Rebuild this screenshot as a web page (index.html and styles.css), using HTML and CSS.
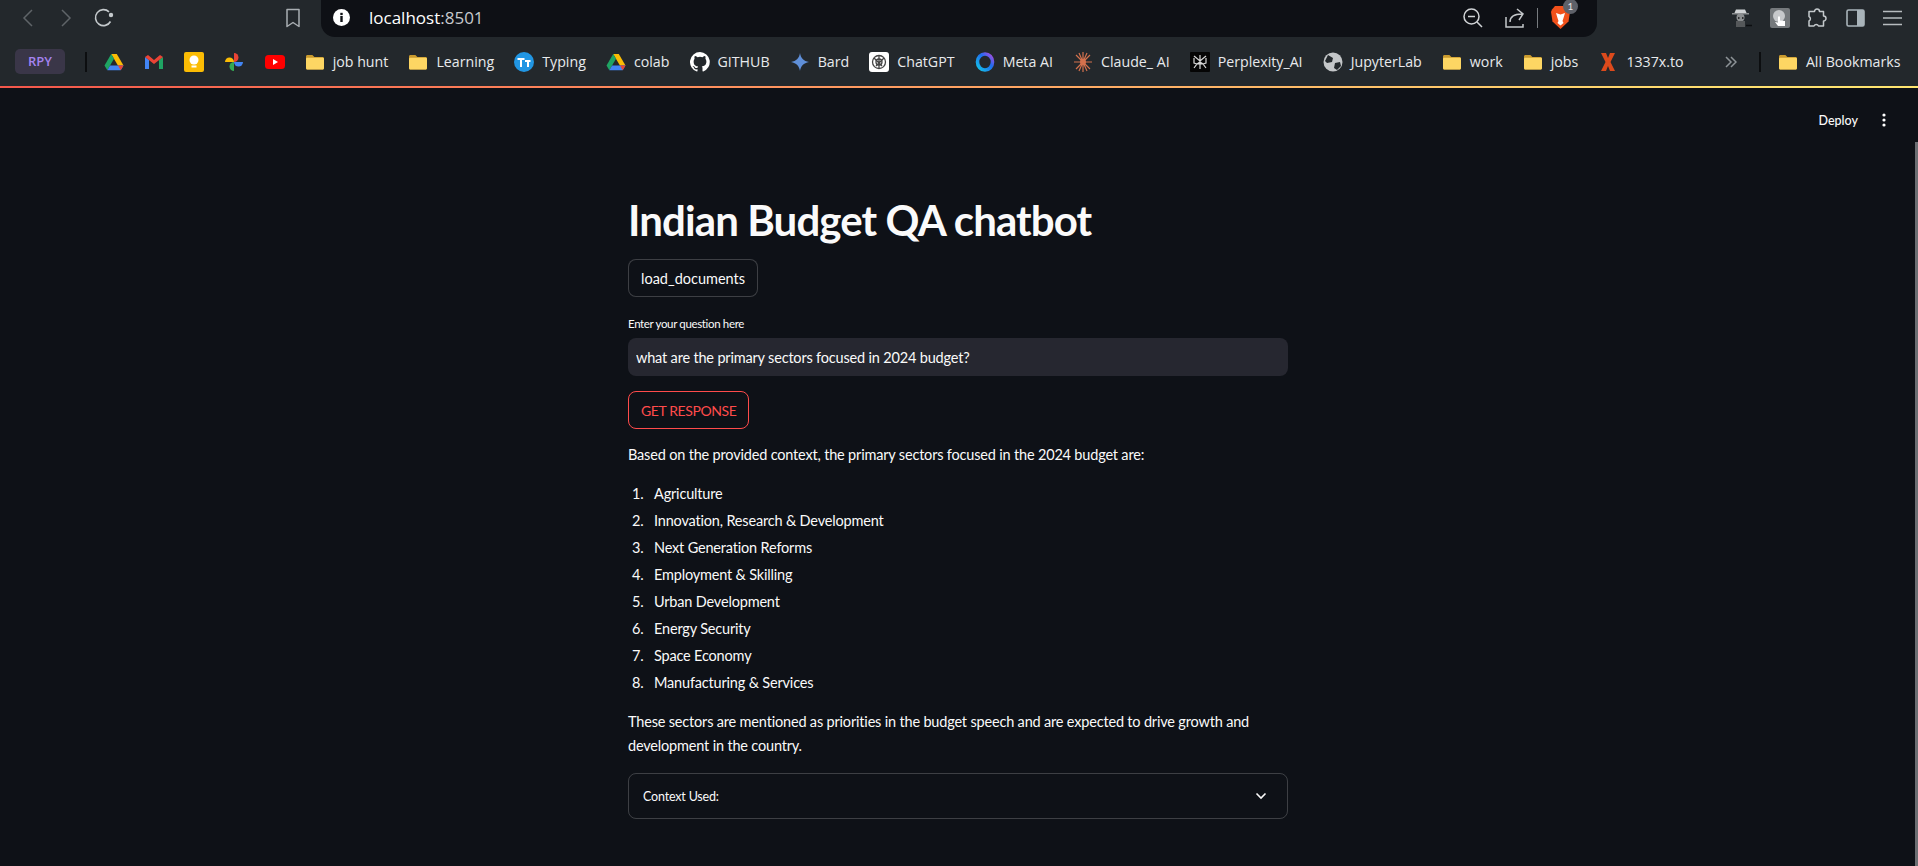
FILE: index.html
```html
<!DOCTYPE html>
<html lang="en">
<head>
    <meta charset="UTF-8">
    <title>Indian Budget QA chatbot</title>
    <link rel="stylesheet" href="styles.css">
</head>
<body>
    <svg class="defs" width="0" height="0">
        <symbol id="folder" viewBox="0 0 20 20">
            <path d="M1 4.500C1 3.700 1.600 3 2.400 3h5l2 2h8.200c.8 0 1.400.7 1.400 1.500v9.500c0 .8-.6 1.500-1.400 1.500H2.400C1.600 17.500 1 16.800 1 16z" fill="#c99a2e"/>
            <path d="M1 7c0-.8.6-1.200 1.400-1.200h15.200c.8 0 1.400.4 1.400 1.200v9c0 .8-.6 1.500-1.400 1.500H2.400C1.600 17.500 1 16.800 1 16z" fill="#fdd663"/>
        </symbol>
        <symbol id="drive" viewBox="0 0 20 20">
            <path d="M7.200 2h5.600l6.700 11.500h-5.600z" fill="#fbbc04"/>
            <path d="M7.200 2L.5 13.500l2.800 4.700 6.700-11.500z" fill="#1fa463"/>
            <path d="M3.300 18.200h13.400l2.800-4.700H6.100z" fill="#4285f4"/>
            <path d="M14 13.500h5.500l-2.800 4.700z" fill="#ea4335"/>
        </symbol>
    </svg>

    <header class="toolbar">
        <div class="nav-buttons">
            <svg class="icon back" width="12" height="18" viewBox="0 0 12 18"><path d="M10 1L2 9l8 8" fill="none" stroke="#5f6468" stroke-width="1.500"/></svg>
            <svg class="icon forward" width="12" height="18" viewBox="0 0 12 18"><path d="M2 1l8 8-8 8" fill="none" stroke="#5f6468" stroke-width="1.500"/></svg>
            <svg class="icon reload" width="20" height="20" viewBox="0 0 20 20"><path d="M16.500 13.500A8 8 0 1 1 15 3.800" fill="none" stroke="#c4c9cc" stroke-width="1.600"/><circle cx="17" cy="7" r="2.200" fill="#c4c9cc"/></svg>
            <svg class="icon bookmark" width="16" height="20" viewBox="0 0 16 20"><path d="M2 1.500h12v17l-6-4-6 4z" fill="none" stroke="#a9aeb2" stroke-width="1.500" stroke-linejoin="round"/></svg>
        </div>
        <div class="address-bar">
            <svg class="icon info" width="17" height="17" viewBox="0 0 17 17"><circle cx="8.500" cy="8.500" r="8.500" fill="#fff"/><rect x="7.300" y="7" width="2.400" height="6" fill="#0e1015"/><rect x="7.300" y="3.800" width="2.400" height="2.300" fill="#0e1015"/></svg>
            <span class="url">localhost<span class="url-port">:8501</span></span>
            <svg class="icon zoom-out" width="20" height="20" viewBox="0 0 20 20"><circle cx="8.500" cy="8.500" r="7.500" fill="none" stroke="#d0d3d6" stroke-width="1.500"/><path d="M5 8.500h7M14 14l5 5" stroke="#d0d3d6" stroke-width="1.500"/></svg>
            <svg class="icon share" width="20" height="20" viewBox="0 0 20 20"><path d="M1 9v10h17v-3M5 14c0-5 4-8 12-8M12 1l6 5-4 6" fill="none" stroke="#c4c7ca" stroke-width="1.500"/></svg>
            <span class="divider"></span>
            <div class="brave">
                <svg width="19" height="23" viewBox="0 0 19 23"><path d="M4 0h11l3 3.500L19 6l-1.500 9.500L9.500 23 1.500 15.500 0 6l1-2.500z" fill="#f1511b"/><path d="M5 7l4.500 1.500L14 7l-1.500 5-1 3 1 2-3 2.500-3-2.500 1-2-1-3z" fill="#fff"/></svg>
                <span class="brave-count">1</span>
            </div>
        </div>
        <div class="extensions">
            <svg class="icon spy" width="22" height="20" viewBox="0 0 22 20"><path d="M3 6h13l-2-4.500H5z" fill="#d0d3d5"/><rect x="1" y="5" width="17" height="1.500" fill="#8a8d8f"/><circle cx="9.500" cy="9.500" r="4" fill="#8b8e90"/><rect x="5" y="13" width="9" height="6" fill="#55585a"/><path d="M7 10h1.500M11 10h1.500" stroke="#111" stroke-width="1.400"/><path d="M15 17.500h6" stroke="#0c0e10" stroke-width="1.500"/></svg>
            <div class="hand-ext">
                <svg width="20" height="20" viewBox="0 0 20 20"><circle cx="9" cy="8" r="6" fill="#c7c9cb"/><path d="M8 8.500h2v4l5 .5v5H8l-3-4 3 .5z" fill="#fff"/></svg>
            </div>
            <svg class="icon puzzle" width="20" height="20" viewBox="0 0 20 20"><path d="M7.500 3.500a2.500 2.500 0 0 1 5 0h4v4.500a2.500 2.500 0 0 1 0 5v5h-5a2.500 2.500 0 0 0-4.500 0H2v-5a2.500 2.500 0 0 0 0-4.500V3.500z" fill="none" stroke="#c4c9cc" stroke-width="1.500" stroke-linejoin="round"/></svg>
            <svg class="icon sidebar" width="19" height="20" viewBox="0 0 19 20"><rect x="1" y="2" width="17" height="16" rx="1.500" fill="none" stroke="#a9b4ba" stroke-width="1.600"/><rect x="11" y="2" width="7" height="16" fill="#a9b4ba"/></svg>
            <svg class="icon menu" width="19" height="20" viewBox="0 0 19 20"><path d="M0 3.500h19M0 10h19M0 16.500h19" stroke="#b7bcbf" stroke-width="1.500"/></svg>
        </div>
    </header>

    <nav class="bookmarks">
        <span class="rpy">RPY</span>
        <span class="bar-sep"></span>
        <div class="bm-item"><svg class="bm-icon"><use href="#drive"/></svg></div>
        <div class="bm-item">
            <svg class="bm-icon" viewBox="0 0 20 20"><path d="M1 5v12h4V8z" fill="#4285f4"/><path d="M19 5v12h-4V8z" fill="#1fa463"/><path d="M1 5l3-2 6 5 6-5 3 2-9 7z" fill="#ea4335"/></svg>
        </div>
        <div class="bm-item">
            <svg class="bm-icon" viewBox="0 0 20 20"><rect width="20" height="20" rx="2" fill="#fbbc04"/><circle cx="10" cy="8" r="4.500" fill="#fff"/><rect x="7.500" y="13.500" width="5" height="2" fill="#fff"/></svg>
        </div>
        <div class="bm-item">
            <svg class="bm-icon" viewBox="0 0 20 20"><path d="M10 10V1a4.500 4.500 0 0 1 0 9z" fill="#ea4335"/><path d="M10 10h9a4.500 4.500 0 0 1-9 0z" fill="#4285f4"/><path d="M10 10v9a4.500 4.500 0 0 1 0-9z" fill="#34a853"/><path d="M10 10H1a4.500 4.500 0 0 1 9 0z" fill="#fbbc04"/></svg>
        </div>
        <div class="bm-item">
            <svg class="bm-icon" viewBox="0 0 20 20"><rect y="3" width="20" height="14" rx="3.500" fill="#f00"/><path d="M8 7l5 3-5 3z" fill="#fff"/></svg>
        </div>
        <div class="bm-item"><svg class="bm-icon"><use href="#folder"/></svg><span>job hunt</span></div>
        <div class="bm-item"><svg class="bm-icon"><use href="#folder"/></svg><span>Learning</span></div>
        <div class="bm-item">
            <svg class="bm-icon" viewBox="0 0 20 20"><circle cx="10" cy="10" r="10" fill="#2196e3"/><path d="M3.500 6h7v2H8v7H6V8H3.500zM11 8h5.500v2H15v5h-2v-5h-2z" fill="#fff"/></svg>
            <span>Typing</span>
        </div>
        <div class="bm-item"><svg class="bm-icon"><use href="#drive"/></svg><span>colab</span></div>
        <div class="bm-item">
            <svg class="bm-icon" viewBox="0 0 16 16"><path fill="#fff" d="M8 0a8 8 0 0 0-2.500 15.600c.4.100.5-.2.500-.4v-1.400c-2.200.5-2.700-1-2.700-1-.4-.9-.9-1.200-.9-1.200-.7-.5.100-.5.100-.5.800.1 1.200.8 1.200.8.700 1.200 1.900.9 2.300.7.100-.5.300-.9.500-1.100-1.800-.2-3.600-.9-3.600-4 0-.9.300-1.600.8-2.100-.1-.2-.4-1 .1-2.100 0 0 .7-.2 2.200.8a7.600 7.600 0 0 1 4 0c1.500-1 2.200-.8 2.200-.8.400 1.100.2 1.900.1 2.100.5.600.8 1.300.8 2.100 0 3.100-1.900 3.700-3.700 3.900.3.300.6.800.6 1.500v2.200c0 .2.100.5.600.4A8 8 0 0 0 8 0z"/></svg>
            <span>GITHUB</span>
        </div>
        <div class="bm-item">
            <svg class="bm-icon" viewBox="0 0 20 20"><path d="M10 1c.8 5 3.500 8 9 9-5.500 1-8.200 4-9 9-.8-5-3.500-8-9-9 5.500-1 8.200-4 9-9z" fill="#5f8fd8"/></svg>
            <span>Bard</span>
        </div>
        <div class="bm-item">
            <svg class="bm-icon" viewBox="0 0 20 20"><rect width="20" height="20" rx="3" fill="#fff"/><g fill="none" stroke="#444" stroke-width="1.300"><circle cx="10" cy="10" r="6.500"/><circle cx="10" cy="10" r="3"/><path d="M5 6l8 8M15 6l-8 8M10 3.500v13"/></g></svg>
            <span>ChatGPT</span>
        </div>
        <div class="bm-item">
            <svg class="bm-icon" viewBox="0 0 20 20"><defs><linearGradient id="meta" x1="0" y1="1" x2="1" y2="0"><stop offset="0" stop-color="#14c6e8"/><stop offset=".6" stop-color="#1f6cf0"/><stop offset="1" stop-color="#b04be0"/></linearGradient></defs><ellipse cx="10" cy="10" rx="7.500" ry="8" fill="none" stroke="url(#meta)" stroke-width="3.600"/></svg>
            <span>Meta AI</span>
        </div>
        <div class="bm-item">
            <svg class="bm-icon" viewBox="0 0 20 20"><path d="M10 0v20M1 10h18M3 3l14 14M17 3L3 17M6 1l8 18M14 1L6 19" stroke="#d4714d" stroke-width="1.200"/><circle cx="10" cy="10" r="3" fill="#d4714d"/></svg>
            <span>Claude_ AI</span>
        </div>
        <div class="bm-item">
            <svg class="bm-icon" viewBox="0 0 20 20"><rect width="20" height="20" rx="1" fill="#050505"/><path d="M10 3v14M4 4l6 5 6-5M4 16l3-4 3-2 3 2 3 4M4 6v5l3 1h6l3-1V6" fill="none" stroke="#d8d8d8" stroke-width="1.200"/></svg>
            <span>Perplexity_AI</span>
        </div>
        <div class="bm-item">
            <svg class="bm-icon" viewBox="0 0 20 20"><circle cx="10" cy="10" r="9.500" fill="#c3c6c8"/><path d="M5 3l5 3-1 4-5 1-2-2zM12 11l5-1 1 4-4 4-3-2z" fill="#23282c"/></svg>
            <span>JupyterLab</span>
        </div>
        <div class="bm-item"><svg class="bm-icon"><use href="#folder"/></svg><span>work</span></div>
        <div class="bm-item"><svg class="bm-icon"><use href="#folder"/></svg><span>jobs</span></div>
        <div class="bm-item">
            <svg class="bm-icon" viewBox="0 0 20 20"><path d="M3 1h5l2 5 2-5h5l-4.500 9L17 19h-5l-2-5-2 5H3l4.500-9z" fill="#dc4a1c"/></svg>
            <span>1337x.to</span>
        </div>
        <svg class="more" width="12" height="12" viewBox="0 0 12 12"><path d="M1 1l5 5-5 5M6 1l5 5-5 5" fill="none" stroke="#8d9397" stroke-width="1.500"/></svg>
        <span class="bar-sep end"></span>
        <div class="bm-item"><svg class="bm-icon"><use href="#folder"/></svg><span>All Bookmarks</span></div>
    </nav>
    <div class="rainbow"></div>

    <div class="app">
        <div class="scroll-thumb"></div>
        <div class="app-header">
            <span class="deploy">Deploy</span>
            <svg class="kebab" width="4" height="14" viewBox="0 0 4 14"><circle cx="2" cy="2" r="1.600" fill="#fff"/><circle cx="2" cy="7" r="1.600" fill="#fff"/><circle cx="2" cy="12" r="1.600" fill="#fff"/></svg>
        </div>
        <main class="main">
            <h1>Indian Budget QA chatbot</h1>
            <button class="btn" type="button">load_documents</button>
            <label class="field-label" for="question">Enter your question here</label>
            <input class="field" id="question" type="text" value="what are the primary sectors focused in 2024 budget?">
            <button class="btn btn-active" type="button">GET RESPONSE</button>
            <p class="intro">Based on the provided context, the primary sectors focused in the 2024 budget are:</p>
            <ol class="sectors">
                <li>Agriculture</li>
                <li>Innovation, Research &amp; Development</li>
                <li>Next Generation Reforms</li>
                <li>Employment &amp; Skilling</li>
                <li>Urban Development</li>
                <li>Energy Security</li>
                <li>Space Economy</li>
                <li>Manufacturing &amp; Services</li>
            </ol>
            <p class="outro">These sectors are mentioned as priorities in the budget speech and are expected to drive growth and development in the country.</p>
            <div class="expander">
                <span>Context Used:</span>
                <svg width="12" height="8" viewBox="0 0 12 8"><path d="M1.500 1.500L6 6l4.500-4.500" fill="none" stroke="#fafafa" stroke-width="1.600"/></svg>
            </div>
        </main>
    </div>
</body>
</html>
```

FILE: styles.css
```css
* {
    box-sizing: border-box;
}

html, body {
    height: 100%;
}

body {
    margin: 0;
    display: flex;
    flex-direction: column;
    overflow: hidden;
    background-color: #0e1117;
    color: #fafafa;
    font-family: 'Lato', 'Noto Sans', sans-serif;
}

.defs {
    position: absolute;
}

.icon {
    display: block;
    flex: none;
}

/* browser toolbar */
.toolbar {
    display: flex;
    height: 37px;
    flex: none;
    background-color: #23282c;
}

.nav-buttons {
    display: flex;
    align-items: center;
    width: 321px;
    flex: none;
    padding-left: 22px;
    padding-bottom: 2px;
}

.forward {
    margin-left: 26px;
}

.reload {
    margin-left: 22px;
}

.bookmark {
    margin-left: 171px;
}

.address-bar {
    display: flex;
    align-items: center;
    width: 1276px;
    flex: none;
    padding-left: 12px;
    padding-bottom: 2px;
    background-color: #0e1015;
    border-radius: 0 0 14px 14px;
}

.url {
    margin-left: 19px;
    font-family: 'Open Sans', sans-serif;
    font-size: 17px;
    color: #fff;
}

.url-port {
    color: #c7cacd;
}

.zoom-out {
    margin-left: auto;
}

.share {
    margin-left: 22px;
}

.divider {
    width: 1px;
    height: 20px;
    margin-left: 12px;
    background-color: #777b7f;
}

.brave {
    position: relative;
    width: 19px;
    height: 23px;
    margin-left: 13px;
    margin-right: 27px;
}

.brave-count {
    position: absolute;
    top: -7px;
    left: 12px;
    width: 15px;
    height: 15px;
    border-radius: 50%;
    background-color: #5e6169;
    color: #e4e4e6;
    font-size: 10px;
    line-height: 15px;
    text-align: center;
}

.extensions {
    display: flex;
    align-items: center;
    flex: 1;
    padding-left: 134px;
    padding-bottom: 2px;
}

.hand-ext {
    display: flex;
    align-items: center;
    justify-content: center;
    width: 20px;
    height: 20px;
    margin-left: 17px;
    border-radius: 2px;
    background-color: #75797c;
}

.puzzle {
    margin-left: 17px;
}

.sidebar {
    margin-left: 19px;
}

.menu {
    margin-left: 18px;
}

/* bookmarks row */
.bookmarks {
    display: flex;
    align-items: center;
    gap: 20.100px;
    height: 49px;
    flex: none;
    padding-left: 15px;
    background-color: #23282c;
    font-family: 'Open Sans', sans-serif;
    font-size: 14.200px;
    color: #e8eaec;
}

.rpy {
    width: 50px;
    height: 25px;
    border-radius: 5px;
    background-color: #3a3648;
    color: #a583f0;
    font-size: 13px;
    font-weight: 600;
    line-height: 25px;
    text-align: center;
}

.bar-sep {
    width: 2px;
    height: 20px;
    margin-right: -3px;
    background-color: #0c0e10;
}

.bar-sep.end {
    margin-left: 2px;
}

.bm-item {
    display: flex;
    align-items: center;
    gap: 8px;
    flex: none;
    white-space: nowrap;
}

.bm-icon {
    display: block;
    width: 20px;
    height: 20px;
}

.more {
    margin-left: 21px;
}

.rainbow {
    height: 2px;
    flex: none;
    background: linear-gradient(to right, #f4574b, #ff8a5c 33%, #ffb066 60%, #ffe070 90%, #ffe670);
}

/* streamlit app */
.app {
    position: relative;
    flex: 1;
    min-height: 0;
    padding-right: 2px;
}

.scroll-thumb {
    position: absolute;
    top: 54px;
    right: 0;
    bottom: 0;
    width: 3px;
    background-color: #6c6f73;
}

.app-header {
    display: flex;
    align-items: center;
    justify-content: flex-end;
    height: 20px;
    margin-top: 22px;
    padding-right: 30px;
}

.deploy {
    font-size: 12.500px;
    font-weight: 500;
}

.kebab {
    margin-left: 24px;
}

.main {
    display: flex;
    flex-direction: column;
    align-items: flex-start;
    width: 660px;
    margin: 0 auto;
    padding-top: 60px;
    font-size: 14.500px;
    letter-spacing: -0.18px;
}

h1 {
    margin: 0 0 9px;
    font-size: 42px;
    font-weight: 700;
    line-height: 60px;
    letter-spacing: -0.9px;
}

.btn {
    height: 38px;
    padding: 0 12px;
    border: 1px solid rgba(250, 250, 250, 0.2);
    border-radius: 8px;
    background-color: #0e1117;
    color: #fafafa;
    font-family: inherit;
    font-size: 14.500px;
    letter-spacing: 0;
}

.btn-active {
    border-color: #ff4b4b;
    color: #ff4b4b;
    font-size: 14px;
    letter-spacing: -0.4px;
}

.field-label {
    margin-top: 18px;
    font-size: 11.500px;
    line-height: 18px;
    letter-spacing: -0.35px;
}

.field {
    width: 100%;
    height: 38px;
    margin-top: 5px;
    margin-bottom: 15px;
    padding: 0 8px;
    border: none;
    border-radius: 8px;
    background-color: #262730;
    color: #fafafa;
    font-family: inherit;
    font-size: 14.500px;
    letter-spacing: inherit;
}

.intro {
    margin: 14px 0 0;
    line-height: 24px;
}

.sectors {
    margin: 13px 0 0;
    padding-left: 0;
    list-style: none;
    counter-reset: sector;
}

.sectors li {
    display: flex;
    height: 27px;
    line-height: 27px;
    counter-increment: sector;
}

.sectors li::before {
    content: counter(sector) ".";
    width: 22px;
    padding-left: 4px;
}

.outro {
    margin: 14px 0 0;
    line-height: 24px;
}

.expander {
    display: flex;
    align-items: center;
    justify-content: space-between;
    width: 100%;
    height: 46px;
    margin-top: 15px;
    padding: 0 20px 0 14px;
    border: 1px solid rgba(250, 250, 250, 0.2);
    border-radius: 8px;
    font-size: 12.500px;
}
```
